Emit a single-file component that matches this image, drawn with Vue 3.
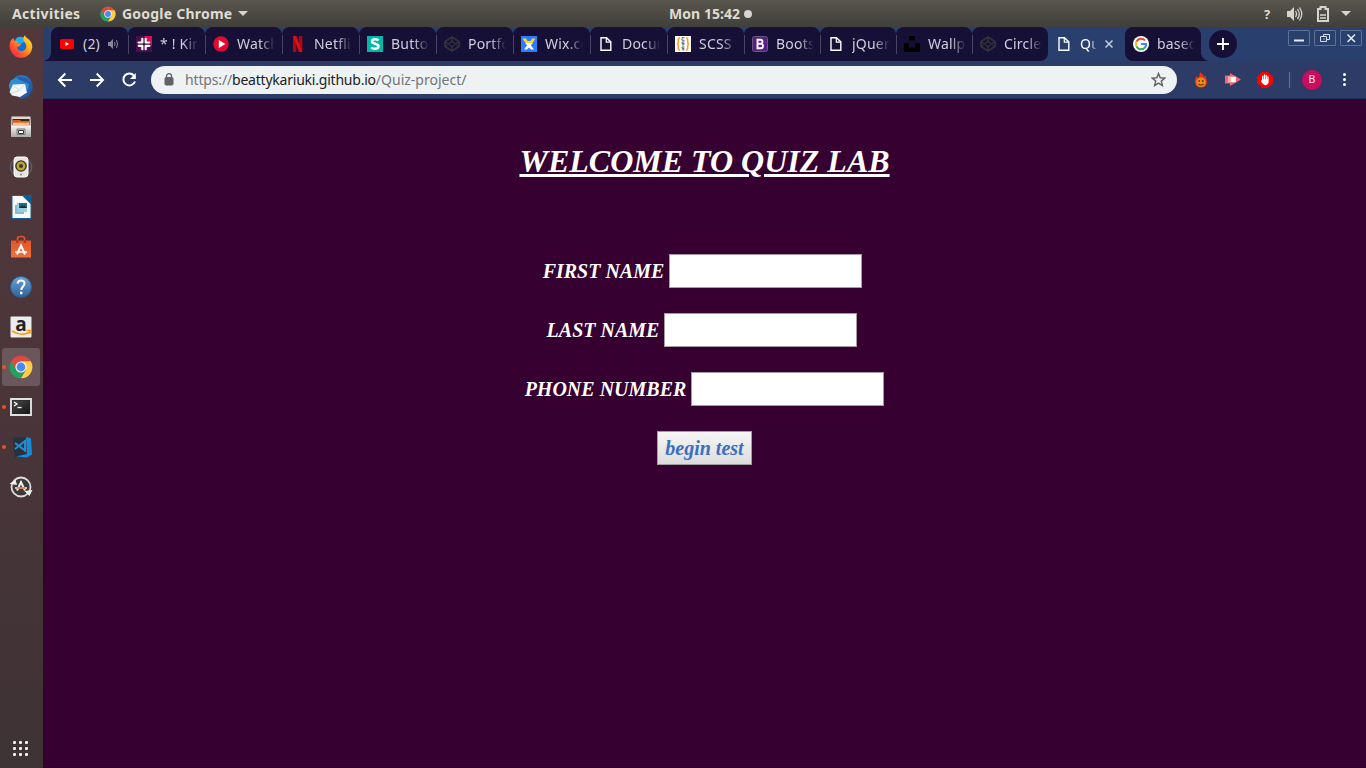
<script setup>
const tabs = [
  { title: '(2)', icon: 'youtube', audio: true },
  { title: '* ! Kiri', icon: 'slack' },
  { title: 'Watch', icon: 'play' },
  { title: 'Netflix', icon: 'netflix' },
  { title: 'Button', icon: 'stack' },
  { title: 'Portfo', icon: 'codepen' },
  { title: 'Wix.co', icon: 'wix' },
  { title: 'Docum', icon: 'page' },
  { title: 'SCSS t', icon: 'scss' },
  { title: 'Bootst', icon: 'bootstrap' },
  { title: 'jQuery', icon: 'page' },
  { title: 'Wallpa', icon: 'unsplash' },
  { title: 'Circle', icon: 'codepen' },
  { title: 'Quiz', icon: 'page', active: true },
  { title: 'based', icon: 'google' },
]
const dock = [
  { icon: 'firefox' }, { icon: 'thunderbird' }, { icon: 'files' }, { icon: 'rhythmbox' },
  { icon: 'writer' }, { icon: 'software' }, { icon: 'help' }, { icon: 'amazon', letter: 'a' },
  { icon: 'chrome', running: true, active: true }, { icon: 'terminal', running: true },
  { icon: 'vscode', running: true }, { icon: 'updater' },
]
const fields = [
  { label: 'FIRST NAME', cls: 'shifted' },
  { label: 'LAST NAME', cls: 'shifted-more' },
  { label: 'PHONE NUMBER', cls: '' },
]
</script>

<template>
  <svg class="defs" width="0" height="0" aria-hidden="true">
    <defs>
      <linearGradient id="gFox" x1="1" y1="0" x2="0" y2="1"><stop offset="0" stop-color="#fff036" /><stop offset=".4" stop-color="#ffa31a" /><stop offset=".7" stop-color="#ff4b31" /><stop offset="1" stop-color="#e3156b" /></linearGradient>
      <linearGradient id="gBlue" x1="0" y1="0" x2="0" y2="1"><stop offset="0" stop-color="#6fa3d8" /><stop offset="1" stop-color="#2d6299" /></linearGradient>
      <linearGradient id="gBird" x1="0" y1="0" x2="1" y2="1"><stop offset="0" stop-color="#2a9be6" /><stop offset="1" stop-color="#20408f" /></linearGradient>
      <linearGradient id="gGrey" x1="0" y1="0" x2="0" y2="1"><stop offset="0" stop-color="#f4f4f2" /><stop offset="1" stop-color="#a9a9a6" /></linearGradient>
      <linearGradient id="gBag" x1="0" y1="0" x2="0" y2="1"><stop offset="0" stop-color="#e2552a" /><stop offset="1" stop-color="#f0703c" /></linearGradient>
      <linearGradient id="gTerm" x1="0" y1="0" x2="1" y2="1"><stop offset="0" stop-color="#4a4a4a" /><stop offset="1" stop-color="#151515" /></linearGradient>
    </defs>
    <symbol id="i-chrome" viewBox="0 0 24 24">
      <circle cx="12" cy="12" r="11.300" fill="#dd4b3e" />
      <path d="M2.200 6.300L7 15l5 3 5-3-5 8.300A11.300 11.300 0 0 1 2.200 6.300z" fill="#1da462" />
      <path d="M12 6.300h9.800A11.300 11.300 0 0 1 12 23.300L17 15z" fill="#ffcd46" />
      <circle cx="12" cy="12" r="5.600" fill="#f4f4f4" /><circle cx="12" cy="12" r="4.400" fill="#4a8af4" />
    </symbol>
    <symbol id="i-firefox" viewBox="0 0 24 24">
      <circle cx="13" cy="11" r="8.500" fill="#0b6fdc" /><path d="M8 2.500c4-2 8 0 9 3l-6 4-6-3z" fill="#1cb0f5" />
      <path d="M1.800 5.500L4.500 2.800 5 5.800 8.400 6.200 9 8.800 12.200 9 10.200 11.500 7.800 12c.2 3 3 4.500 5.800 3.900 3.200-.7 4.400-3.400 3.400-6.200-.6-1.700-1.800-2.600-2.500-4.200-.5-1.700 0-3.600 1.300-5.200 1.300 3 4 3.200 6 6.500 1 1.700 1.500 3.400 1.500 5.500A11.200 11.200 0 0 1 1.400 15C.1 11.700.3 8.200 1.800 5.500z" fill="url(#gFox)" />
    </symbol>
    <symbol id="i-thunderbird" viewBox="0 0 24 24">
      <path d="M3 7C5 1 11-1 17 1c6 3 8 10 6 15-2 6-8 9-13 7z" fill="url(#gBird)" />
      <path d="M7 2c7-2 14 2 15 9 0 4-2 8-6 11 1-5 2-9-1-13z" fill="#2b5fae" />
      <path d="M0 10C1 5 4 3 8 4l12 5-1 5-17 2C0 14 0 12 0 10z" fill="#2b8fd8" />
      <path d="M.5 17L4 9.500 16 9l2 8.500-7 4.500-8-1.500z" fill="#f5f7f9" /><path d="M4 9.500l6 6L16 9M10 15.500L2 18.500" fill="none" stroke="#c0cad4" stroke-width=".8" />
    </symbol>
    <symbol id="i-files" viewBox="0 0 24 24">
      <path d="M2.500 1.500h19L22 11H2z" fill="#dedbd6" /><path d="M3.500 4h17v6h-17z" fill="#38251e" />
      <path d="M4 5h7l1 1h8v5H4z" fill="#d85c22" /><path d="M4 8h16v3H4z" fill="#ffc195" /><path d="M4 7h16v1H4z" fill="#f47b35" />
      <path d="M2 11h20v11H2z" fill="url(#gGrey)" /><path d="M8 14h8v5.500H8z" fill="#d5d5d2" stroke="#777" /><path d="M9.500 15.500h5v3h-5z" fill="#fff" stroke="#333" />
    </symbol>
    <symbol id="i-rhythmbox" viewBox="0 0 24 24">
      <path d="M3.500 6Q-1 12 3.500 18M20.500 6Q25 12 20.500 18" fill="none" stroke="#5b6478" stroke-width="1.200" />
      <rect x="5" y="2" width="14" height="20" rx="3" fill="#e5e6e3" stroke="#fff" /><circle cx="12" cy="11" r="5.800" fill="#2e312f" />
      <circle cx="12" cy="11" r="4.500" fill="#c0a520" /><circle cx="12" cy="11" r="2" fill="#343848" /><circle cx="12" cy="19.500" r="1" fill="#888" />
    </symbol>
    <symbol id="i-writer" viewBox="0 0 24 24">
      <path d="M3 .5h12l7 7.500v15.500H3z" fill="#fafafa" stroke="#12629b" /><path d="M12.500 0H22.500v10z" fill="#0b5e97" />
      <path d="M6 10h9v9H6z" fill="#83bddb" /><path d="M8 8h10v9H8z" fill="#9accdf" /><path d="M10 8h8v5h-8z" fill="#246b82" /><path d="M10 13l3-3 1.500 1.500 1-1L18 13z" fill="#11313c" />
    </symbol>
    <symbol id="i-software" viewBox="0 0 24 24">
      <path d="M8.500 7V3.500q0-2 3.500-2t3.500 2V7" fill="none" stroke="#df5428" stroke-width="1.700" />
      <path d="M2 5.500h20V22.500H2z" fill="url(#gBag)" /><path d="M7 5h2.500v3H7zm7.500 0H17v3h-2.500z" fill="#b23a19" />
      <path d="M8 19.500L12 10.500l4 9" fill="none" stroke="#fff" stroke-width="2" /><path d="M6 17h12" stroke="#fff" stroke-width="1.500" />
    </symbol>
    <symbol id="i-help" viewBox="0 0 24 24">
      <circle cx="12" cy="12" r="10.500" fill="url(#gBlue)" stroke="#2d5f93" /><path d="M8.500 8.500Q9 5.500 12 5.500q3.500 0 3.500 3c0 3-3.200 3-3.200 6.500" fill="none" stroke="#fff" stroke-width="2" /><circle cx="12.200" cy="18" r="1.400" fill="#fff" />
    </symbol>
    <symbol id="i-amazon" viewBox="0 0 24 24">
      <rect x="1.500" y="1.500" width="21" height="21" rx="1" fill="#ececec" />
      <path d="M3 16q9 5.500 17 1.500M17.500 15.500h3.500v3" fill="none" stroke="#f90" stroke-width="1.500" />
    </symbol>
    <symbol id="i-terminal" viewBox="0 0 24 24">
      <path d="M2 4h20v16H2z" fill="#242424" stroke="#e0e0de" stroke-width="1.900" /><path d="M3.500 5.500h17v13h-17z" fill="url(#gTerm)" /><path d="M5 7l3 2L5 11" fill="none" stroke="#fff" stroke-width="1.300" /><path d="M8.500 12.500h4" stroke="#fff" stroke-width="1.300" />
    </symbol>
    <symbol id="i-vscode" viewBox="0 0 24 24">
      <path d="M3.500 3L17 2v18L6 22.500z" fill="#27323c" /><path d="M17 2l5 1.500 1 16-5 3L7 21.500 18 19z" fill="#168bd9" />
      <path d="M6 8l10 7.500V6L6 14" fill="none" stroke="#268fd8" stroke-width="1.900" />
    </symbol>
    <symbol id="i-updater" viewBox="0 0 24 24">
      <circle cx="12" cy="12" r="9.500" fill="#3b3b39" stroke="#deddd9" stroke-width="1.800" /><path d="M.5 9l6-4.500L8 10zM23.500 15l-3 6-5-5z" fill="#eee" />
      <path d="M8 15.500L12 7l4 8.500" fill="none" stroke="#f2f2f0" stroke-width="2" /><path d="M6 13h12" stroke="#eee" stroke-width="1.500" /><path d="M8 13h8" stroke="#ed6232" stroke-width="1.500" />
    </symbol>
    <symbol id="i-youtube" viewBox="0 0 16 16"><rect x="1" y="3" width="14" height="10" rx="2" fill="#f00" /><path d="M6.500 6v4l3.500-2z" fill="#fff" /></symbol>
    <symbol id="i-slack" viewBox="0 0 16 16">
      <path d="M0 0h16v16H0z" fill="#4b0d49" /><path d="M8 0h8v10z" fill="#dc0d50" />
      <path d="M6.300 2.800v3.500M9.700 6.300V2.800M2.500 6.500h3.800M9.700 6.500h3.500M2.800 9.800h3.500M9.700 9.800h3.800M6.300 9.800v3.400M9.700 9.800v3.400" stroke="#fff" stroke-width="2.200" stroke-linecap="round" />
    </symbol>
    <symbol id="i-play" viewBox="0 0 16 16"><circle cx="8" cy="8" r="7.700" fill="#e10b32" /><path d="M5.800 4v8L12.300 8z" fill="#fff" /></symbol>
    <symbol id="i-netflix" viewBox="0 0 16 16"><path d="M3 0h3.300v16H3zM9 0h3.300v16H9z" fill="#b1060f" /><path d="M3 0h3.300l6 16H9z" fill="#e50914" /></symbol>
    <symbol id="i-stack" viewBox="0 0 16 16"><path d="M0 0h16v16H0z" fill="#00b8a9" /><path d="M11.500 4.500C10.500 3 5 2.500 5 5.500 5 8.200 11.500 7.300 11.500 10.300 11.500 13.500 5.500 13.300 4.300 11.300" fill="none" stroke="#fff" stroke-width="2.500" /></symbol>
    <symbol id="i-codepen" viewBox="0 0 16 16"><path d="M8 1l7 4.500v5L8 15l-7-4.500v-5zM8 1v5M8 10v5M1 5.500l7 5 7-5M1 10.500l7-5 7 5" fill="none" stroke="#333337" stroke-width="1.500" stroke-linejoin="round" /></symbol>
    <symbol id="i-wix" viewBox="0 0 16 16"><path d="M0 0h16v16H0z" fill="#2f7bff" /><path d="M1.500 2.500H5L6.500 5h3L11 2.500h3.500L11.500 7v1h-7V7z" fill="#ffd820" /><path d="M5 7h6l-1 2.500 3 4H10l-2-2-2 2H3l3-4z" fill="#fff" /></symbol>
    <symbol id="i-page" viewBox="0 0 16 16"><path d="M3 1.700h5.500l4.300 4.200v8.400H3z" fill="none" stroke="#fff" stroke-width="1.400" /><path d="M8.300 2v4.200h4.200" fill="none" stroke="#fff" stroke-width="1.200" /></symbol>
    <symbol id="i-scss" viewBox="0 0 16 16"><path d="M0 0h16v16H0z" fill="#fff" /><path d="M5 2H4.500Q3.300 2 3.300 4v2q0 2-1.500 2 1.500 0 1.500 2v2q0 2 1.200 2H5M11 2h.5q1.200 0 1.200 2v2q0 2 1.500 2-1.500 0-1.500 2v2q0 2-1.200 2H11" fill="none" stroke="#f5a02d" stroke-width="1.600" /><path d="M9.500 1.700H7v2.600h2.500M9.500 6H7v1.400h2v1.500H6.800M9.500 11H7v1.400h2v1.500H6.800" fill="none" stroke="#666" /></symbol>
    <symbol id="i-bootstrap" viewBox="0 0 16 16"><rect x=".5" y=".5" width="15" height="15" rx="2" fill="#5a2081" stroke="#68577d" /><path d="M5.500 3.700h3q2 0 2 2t-2 2h-3 3.300q2.200 0 2.200 2.300t-2.200 2.300H5.500z" fill="none" stroke="#fff" stroke-width="1.900" /></symbol>
    <symbol id="i-unsplash" viewBox="0 0 16 16"><path d="M5 0h6v4.500H5zM0 7h5v4.500h6V7h5v9H0z" fill="#000" /></symbol>
    <symbol id="i-google" viewBox="0 0 16 16"><circle cx="8" cy="8" r="8" fill="#fff" /><g fill="none" stroke-width="2"><path d="M12 4.500A5.200 5.200 0 0 0 3.500 5.500" stroke="#ea4335" /><path d="M3.500 5.500a5.200 5.200 0 0 0 0 5" stroke="#fbbc05" /><path d="M3.500 10.500A5.200 5.200 0 0 0 11.500 12" stroke="#34a853" /><path d="M11.500 12A5.200 5.200 0 0 0 13.200 8H8" stroke="#4285f4" /></g></symbol>
  </svg>

  <div class="desktop">
    <header class="topbar">
      <span class="activities">Activities</span>
      <svg class="app-icon" width="16" height="16"><use href="#i-chrome" /></svg>
      <span class="app-name">Google Chrome</span>
      <svg class="caret" width="10" height="5"><path d="M0 0h10L5 5z" fill="#d5d4cf" /></svg>
      <span class="clock">Mon 15:42</span><i class="clock-dot"></i>
      <div class="tray">
        <span class="ask">?</span>
        <svg width="17" height="16" viewBox="0 0 17 16"><path d="M1 5h3l4-4v14l-4-4H1z" fill="#d5d4cf" /><path d="M9.500 5q2 3 0 6M11.500 3q3.500 5 0 10M13.500 1.500q4.500 6.500 0 13" fill="none" stroke="#d5d4cf" stroke-width="1.300" /></svg>
        <svg class="battery" width="12" height="16" viewBox="0 0 12 16"><path d="M1 3h2.500V1h5v2H11v12H1z" fill="none" stroke="#d5d4cf" stroke-width="2" /><path d="M3 9h6M3 12h6" stroke="#d5d4cf" stroke-width="1.500" /></svg>
        <svg width="10" height="5"><path d="M0 0h10L5 5z" fill="#d5d4cf" /></svg>
      </div>
    </header>

    <div class="workspace">
      <aside class="dock">
        <div v-for="item in dock" :key="item.icon" class="dock-item" :class="{ active: item.active }">
          <i v-if="item.running" class="running"></i>
          <svg width="24" height="24"><use :href="'#i-' + item.icon" /></svg>
          <span v-if="item.letter" class="icon-letter">{{ item.letter }}</span>
        </div>
        <div class="apps-grid"><i v-for="n in 9" :key="n"></i></div>
      </aside>

      <section class="browser">
        <div class="tabstrip">
          <div v-for="(tab, i) in tabs" :key="i" class="tab" :class="{ active: tab.active, first: i === 0, narrow: i > 8, beforeActive: i === 12, last: i === 14 }">
            <svg class="favicon" width="16" height="16"><use :href="'#i-' + tab.icon" /></svg>
            <span class="tab-title" :class="{ plain: tab.audio }">{{ tab.title }}</span>
            <svg v-if="tab.audio" class="audio" width="11" height="10" viewBox="0 0 11 10"><path d="M0 3h2l3-3v10L2 7H0z" fill="#89859b" /><path d="M6.500 3q1 2 0 4M8.500 1q2 4 0 8" fill="none" stroke="#89859b" /></svg>
            <svg v-if="tab.active" class="close" width="8" height="8"><path d="M.5.5l7 7M7.500.5l-7 7" stroke="#c5cee0" stroke-width="1.500" /></svg>
          </div>
          <div class="new-tab"><svg width="12" height="12"><path d="M6 0v12M0 6h12" stroke="#fff" stroke-width="1.800" /></svg></div>
          <div class="window-buttons">
            <i><svg width="20" height="14"><path d="M5 9.500h10" stroke="#e8edf5" stroke-width="2" /></svg></i>
            <i><svg width="20" height="14"><path d="M8.500 3.500h6v5h-6z" fill="none" stroke="#d7deeb" /><path d="M5.500 5.500h6v5h-6z" fill="#294170" stroke="#d7deeb" /><path d="M8 8h2" stroke="#8694b3" /></svg></i>
            <i><svg width="20" height="14"><path d="M6.500 3.500l7.500 7.500M14 3.500L6.500 11" stroke="#e8edf5" stroke-width="1.500" /></svg></i>
          </div>
        </div>

        <div class="toolbar">
          <svg class="nav" width="16" height="16" viewBox="0 0 16 16"><path d="M15 8H2M8.300 1.500L2 8l6.300 6.500" /></svg>
          <svg class="nav" width="16" height="16" viewBox="0 0 16 16"><path d="M1 8h13M7.700 1.500L14 8l-6.300 6.500" /></svg>
          <svg class="nav" width="16" height="16" viewBox="0 0 16 16"><path d="M13.300 4A6 6 0 1 0 14 9.500" /><path d="M14.800 1v6H9z" fill="#fff" stroke="none" /></svg>
          <div class="omnibox">
            <svg class="lock" width="10" height="13" viewBox="0 0 10 13"><rect x="1" y="4.500" width="8" height="7.500" rx="1" fill="#5f6368" stroke="#5f6368" /><path d="M2.500 5V3.200a2.500 2.500 0 0 1 5 0V5" fill="none" stroke="#5f6368" stroke-width="1.300" /></svg>
            <span class="url"><span>https://</span><b>beattykariuki.github.io</b><span class="path">/Quiz-project/</span></span>
            <svg class="star" width="15" height="15" viewBox="0 0 15 15"><path d="M7.500 1.500l1.700 4.300 4.600.3-3.500 3 1.100 4.500-3.900-2.500-3.900 2.500 1.100-4.500-3.500-3 4.600-.3z" fill="none" stroke="#5f6368" stroke-width="1.400" /></svg>
          </div>
          <svg class="ext flame" width="14" height="16" viewBox="0 0 14 16"><path d="M6 0q4 3 4 5l2-1.500Q12 6 13 9.500q0 6-6 6t-6-6Q1 7 2 4l2 2q2-2 2-6z" fill="#e8331f" /><circle cx="7" cy="10.300" r="4.800" fill="#f08c0c" /><path d="M5.200 8v2M8.800 8v2M4.500 12q2.500 2 5 0" fill="none" stroke="#502a0a" stroke-width="1.200" /></svg>
          <svg class="ext arrow" width="16" height="13" viewBox="0 0 16 13"><path d="M0 2.500h5V0l11 6.500L5 13v-2.500H0z" fill="#f2666c" /><path d="M3 3.500h8v6H3z" fill="#fff" opacity=".5" /><path d="M6 4h5v5H6z" fill="#fff" /></svg>
          <svg class="ext stop" width="16" height="16" viewBox="0 0 16 16"><path d="M5 0h6l5 5v6l-5 5H5l-5-5V5z" fill="#f00" /><path d="M5.700 8V4.500M7.500 8V3M9.300 8V3.500M11 9V5M6 8h5v2.500Q10 12.500 8.500 12.500T4.500 9" fill="#fff" stroke="#fff" stroke-width="1.300" stroke-linecap="round" /></svg>
          <i class="divider"></i>
          <span class="avatar">B</span>
          <span class="menu"><i></i><i></i><i></i></span>
        </div>

        <main class="page">
          <h1>WELCOME TO QUIZ LAB</h1>
          <form class="form" @submit.prevent>
            <label v-for="f in fields" :key="f.label" class="field" :class="f.cls">
              <span>{{ f.label }}</span><input type="text" />
            </label>
            <button class="begin">begin test</button>
          </form>
        </main>
      </section>
    </div>
  </div>
</template>

<style>
body { margin: 0; overflow: hidden; background: #360030; }
</style>

<style scoped>
* { box-sizing: border-box; }
svg { display: block; flex: none; }
.defs { position: absolute; }
.desktop { width: 1366px; height: 768px; display: flex; flex-direction: column; overflow: hidden; font-family: "Noto Sans", "Open Sans", sans-serif; white-space: nowrap; }
.topbar { height: 27px; flex: none; display: flex; align-items: center; padding-left: 12px; background: linear-gradient(#59564e, #403f39); color: #dfdbd2; font: 700 14px/27px "Noto Sans", sans-serif; }
.activities { width: 88px; letter-spacing: .35px; }
.app-icon { margin-right: 6px; }
.app-name { width: 116px; letter-spacing: .22px; }
.caret { margin-right: 421px; }
.clock { width: 75px; letter-spacing: .05px; }
.clock-dot { width: 8px; height: 8px; border-radius: 50%; background: #d5d4cf; }
.tray { margin-left: auto; margin-right: 15px; display: flex; align-items: center; }
.ask { font-size: 13px; width: 22px; padding-top: 2px; }
.battery { margin: 0 12px 0 14px; }
.workspace { flex: 1; display: flex; min-height: 0; }
.dock { width: 43px; flex: none; display: flex; flex-direction: column; align-items: center; background: linear-gradient(#53383b, #493539 55%, #3e3335); padding-right: 1px; }
.dock-item { width: 38px; height: 38px; margin: 1px 0; display: flex; align-items: center; justify-content: center; border-radius: 3px; position: relative; flex: none; }
.dock-item.active { background: #6a575c; }
.running { position: absolute; left: 0; top: 17px; width: 4px; height: 4px; border-radius: 50%; background: #e95420; }
.icon-letter { position: absolute; left: 0; top: 4px; width: 38px; text-align: center; font: 700 19px/24px "Open Sans", sans-serif; color: #222; }
.apps-grid { display: grid; grid-template-columns: repeat(3, 3px); gap: 3px; margin-top: auto; margin-bottom: 12px; margin-right: 1px; }
.apps-grid i { width: 3px; height: 3px; border-radius: 1px; background: #f4f0f0; }
.browser { flex: 1; min-width: 0; display: flex; flex-direction: column; }
.tabstrip { height: 34px; flex: none; display: flex; background: #293f6d; padding-left: 8px; }
.tab { width: 77px; flex: none; height: 34px; display: flex; align-items: center; padding-left: 8px; background: #171036; border-radius: 8px 8px 0 0; position: relative; color: #d0cedb; }
.tab.narrow { width: 76px; }
.tab:not(.first):not(.active):not(.last)::before { content: ""; position: absolute; left: 0; top: 8px; width: 1px; height: 19px; background: #4a4560; }
.tab.first::before { content: ""; position: absolute; left: -8px; bottom: 0; width: 8px; height: 8px; background: radial-gradient(circle at 0 0, transparent 7.500px, #171036 8px); }
.tab.last::after { content: ""; position: absolute; right: -8px; bottom: 0; width: 8px; height: 8px; background: radial-gradient(circle at 100% 0, transparent 7.500px, #171036 8px); }
.tab.beforeActive { border-radius: 8px 8px 8px 0; }
.tab.active { width: 77px; background: transparent; color: #fff; }
.tab.last { border-radius: 8px 8px 0 8px; width: 76px; }
.tab-title { margin-left: 8px; width: 38px; overflow: hidden; font-size: 14px; line-height: 20px; letter-spacing: .2px; -webkit-mask-image: linear-gradient(90deg, #000 60%, transparent); mask-image: linear-gradient(90deg, #000 60%, transparent); }
.tab-title.plain { width: 25px; -webkit-mask-image: none; mask-image: none; }
.tab.active .tab-title { width: 17px; margin-right: 8px; }
.new-tab { width: 28px; height: 28px; margin: 3px 0 0 8px; border-radius: 50%; background: #171036; display: flex; align-items: center; justify-content: center; }
.window-buttons { margin: 3px 4px 0 auto; display: flex; gap: 4px; }
.window-buttons i { width: 22px; height: 16px; border: 1px solid #5d719a; border-radius: 1px; }
.toolbar { height: 38px; flex: none; display: flex; align-items: center; padding-left: 14px; background: #2d3b67; border-bottom: 1px solid #1f3158; }
.nav { margin-right: 16px; fill: none; stroke: #fff; stroke-width: 2; }
.omnibox { width: 1026px; height: 28px; margin-left: -2px; border-radius: 14px; background: #eef2f3; display: flex; align-items: center; padding: 0 11px 0 13px; }
.url { margin-left: 11px; font-size: 14px; letter-spacing: -.15px; color: #70757a; }
.url b { font-weight: 400; color: #202124; letter-spacing: -.22px; }
.url .path { letter-spacing: 0; }
.star { margin-left: auto; }
.flame { margin-left: 17px; }
.arrow { margin-left: 17px; }
.stop { margin-left: 16px; }
.divider { width: 1px; height: 16px; margin-left: 16px; background: #64719a; }
.avatar { width: 20px; height: 20px; margin-left: 12px; border-radius: 50%; background: #cb0b5c; color: #fbdbe8; font: 11px/20px Roboto, sans-serif; text-align: center; }
.menu { margin-left: 21px; display: flex; flex-direction: column; gap: 2px; }
.menu i { width: 3px; height: 3px; border-radius: 50%; background: #fff; }
.page { flex: 1; background: #360030; border-bottom: 1px solid #22001e; color: #fff; display: flex; flex-direction: column; align-items: center; font-family: "Liberation Serif", serif; font-weight: 700; font-style: italic; }
.page h1 { margin: 44px 0 0; font-size: 32px; line-height: 37px; text-decoration: underline; text-underline-offset: 2px; text-decoration-thickness: 3px; }
.form { margin-top: 74px; display: flex; flex-direction: column; align-items: center; gap: 25px; font-size: 20px; }
.field { display: flex; align-items: center; gap: 5px; height: 34px; }
.field span { padding-top: 1px; }
.field.shifted { margin-right: 4px; }
.field.shifted-more { margin-right: 5px; }
.field input { width: 193px; height: 34px; border: 1px solid #a59ca5; padding: 0; background: #fff; border-radius: 0; outline: 0; }
.begin { width: 95px; height: 34px; padding: 1px 0 0; border: 1px solid #a0a0a0; border-radius: 0; background: linear-gradient(#f6f6f6, #dcdcdc); color: #3b6fbf; font: italic 700 20px "Liberation Serif", serif; }
</style>
